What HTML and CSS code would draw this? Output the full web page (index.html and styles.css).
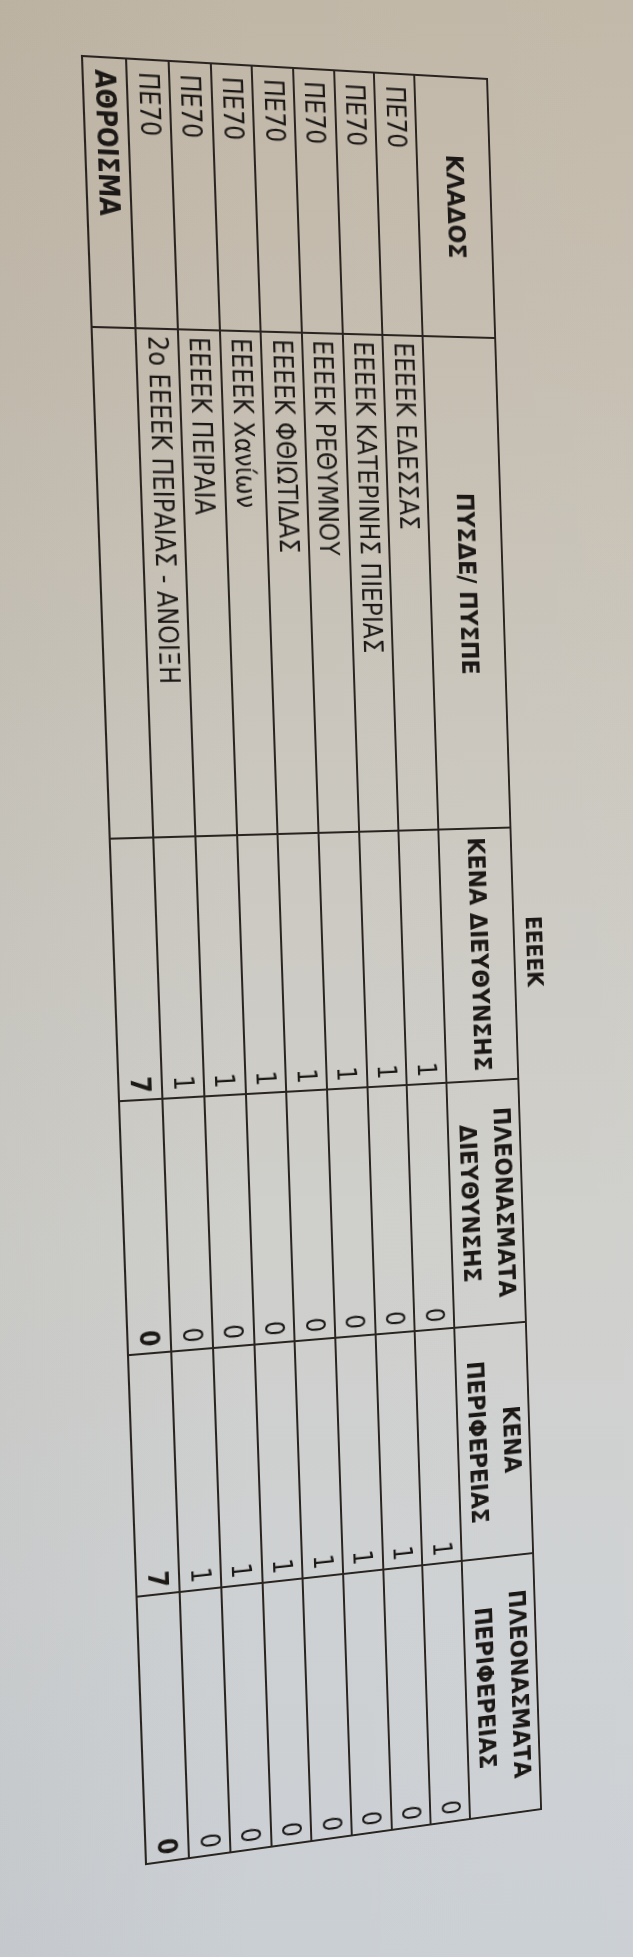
FILE: index.html
```html
<!DOCTYPE html>
<html lang="el">
<head>
<meta charset="utf-8">
<title>ΕΕΕΕΚ</title>
<link rel="stylesheet" href="styles.css">
</head>
<body>
<div class="sheet">
  <div class="title-row"><span class="title">ΕΕΕΕΚ</span></div>
  <table class="alloc">
    <colgroup>
      <col class="col-klados">
      <col class="col-pysde">
      <col class="col-kd">
      <col class="col-pd">
      <col class="col-kp">
      <col class="col-pp">
    </colgroup>
    <thead>
      <tr>
        <th>ΚΛΑΔΟΣ</th>
        <th>ΠΥΣΔΕ/ ΠΥΣΠΕ</th>
        <th>ΚΕΝΑ ΔΙΕΥΘΥΝΣΗΣ</th>
        <th>ΠΛΕΟΝΑΣΜΑΤΑ<br>ΔΙΕΥΘΥΝΣΗΣ</th>
        <th>ΚΕΝΑ<br>ΠΕΡΙΦΕΡΕΙΑΣ</th>
        <th>ΠΛΕΟΝΑΣΜΑΤΑ<br>ΠΕΡΙΦΕΡΕΙΑΣ</th>
      </tr>
    </thead>
    <tbody>
      <tr><td class="klados">ΠΕ70</td><td class="unit">ΕΕΕΕΚ ΕΔΕΣΣΑΣ</td><td class="num">1</td><td class="num">0</td><td class="num">1</td><td class="num">0</td></tr>
      <tr><td class="klados">ΠΕ70</td><td class="unit">ΕΕΕΕΚ ΚΑΤΕΡΙΝΗΣ ΠΙΕΡΙΑΣ</td><td class="num">1</td><td class="num">0</td><td class="num">1</td><td class="num">0</td></tr>
      <tr><td class="klados">ΠΕ70</td><td class="unit">ΕΕΕΕΚ ΡΕΘΥΜΝΟΥ</td><td class="num">1</td><td class="num">0</td><td class="num">1</td><td class="num">0</td></tr>
      <tr><td class="klados">ΠΕ70</td><td class="unit">ΕΕΕΕΚ ΦΘΙΩΤΙΔΑΣ</td><td class="num">1</td><td class="num">0</td><td class="num">1</td><td class="num">0</td></tr>
      <tr><td class="klados">ΠΕ70</td><td class="unit">ΕΕΕΕΚ Χανίων</td><td class="num">1</td><td class="num">0</td><td class="num">1</td><td class="num">0</td></tr>
      <tr><td class="klados">ΠΕ70</td><td class="unit">ΕΕΕΕΚ ΠΕΙΡΑΙΑ</td><td class="num">1</td><td class="num">0</td><td class="num">1</td><td class="num">0</td></tr>
      <tr><td class="klados">ΠΕ70</td><td class="unit">2ο ΕΕΕΕΚ ΠΕΙΡΑΙΑΣ - ΑΝΟΙΞΗ</td><td class="num">1</td><td class="num">0</td><td class="num">1</td><td class="num">0</td></tr>
      <tr class="sum"><td class="klados">ΑΘΡΟΙΣΜΑ</td><td class="unit"></td><td class="num">7</td><td class="num">0</td><td class="num">7</td><td class="num">0</td></tr>
    </tbody>
  </table>
</div>
</body>
</html>
```
FILE: styles.css
```css
html, body {
  margin: 0;
  padding: 0;
  width: 633px;
  height: 1957px;
  overflow: hidden;
}

body {
  background:
    linear-gradient(90deg, rgba(110, 100, 85, 0.06) 0%, rgba(255, 255, 255, 0) 40%, rgba(255, 255, 255, 0.03) 100%),
    linear-gradient(180deg, #c1b7a7 0%, #c5bdb0 18%, #cbc8c0 42%, #cfcfcb 62%, #ced1d3 82%, #cacfd4 100%);
  color: #1b1816;
  font-family: "DejaVu Sans Condensed", "DejaVu Sans", sans-serif;
  font-stretch: condensed;
}

/* The printed sheet: laid out as the page is read when turned (vertical-rl),
   then given the slight tilt and perspective of the photo. */
.sheet {
  writing-mode: vertical-rl;
  inline-size: 1770px;
  block-size: 436px;
  transform-origin: 0 0;
  transform: matrix3d(1.062930, 0.066080, 0, 0.00011366,
                      0.037742, 1.041541, 0, 0.000010774,
                      0, 0, 1, 0,
                      83, 55, 0, 1);
  filter: blur(0.25px);
}

.title-row {
  display: grid;
  grid-template-columns: 261px 497px 257px 250px 239px 266px;
  block-size: 34px;
  align-items: end;
}

.title {
  grid-column: 3;
  justify-self: center;
  font-weight: bold;
  font-size: 23px;
  line-height: 28px;
  margin-block-end: 6px;
}

.alloc {
  inline-size: 1770px;
  border-collapse: collapse;
  table-layout: fixed;
}

.col-klados { inline-size: 261px; }
.col-pysde { inline-size: 497px; }
.col-kd { inline-size: 257px; }
.col-pd { inline-size: 250px; }
.col-kp { inline-size: 239px; }
.col-pp { inline-size: 266px; }

.alloc th,
.alloc td {
  border: 2px solid #29241f;
  padding: 0;
  vertical-align: middle;
  white-space: nowrap;
  overflow: hidden;
}

.alloc thead tr {
  block-size: 75px;
}

.alloc th {
  font-weight: bold;
  font-size: 25px;
  line-height: 36px;
  text-align: center;
}

.alloc tbody tr {
  block-size: 40.7px;
}

.alloc tbody tr.sum {
  block-size: 42px;
}

.alloc td {
  font-size: 26px;
  line-height: 30px;
}

.alloc td.klados {
  padding-inline-start: 11px;
  text-align: start;
}

.alloc td.unit {
  padding-inline-start: 6px;
  text-align: start;
}

.alloc td.num {
  padding-inline-end: 6px;
  text-align: end;
}

.alloc tr.sum td {
  font-weight: bold;
}
```
